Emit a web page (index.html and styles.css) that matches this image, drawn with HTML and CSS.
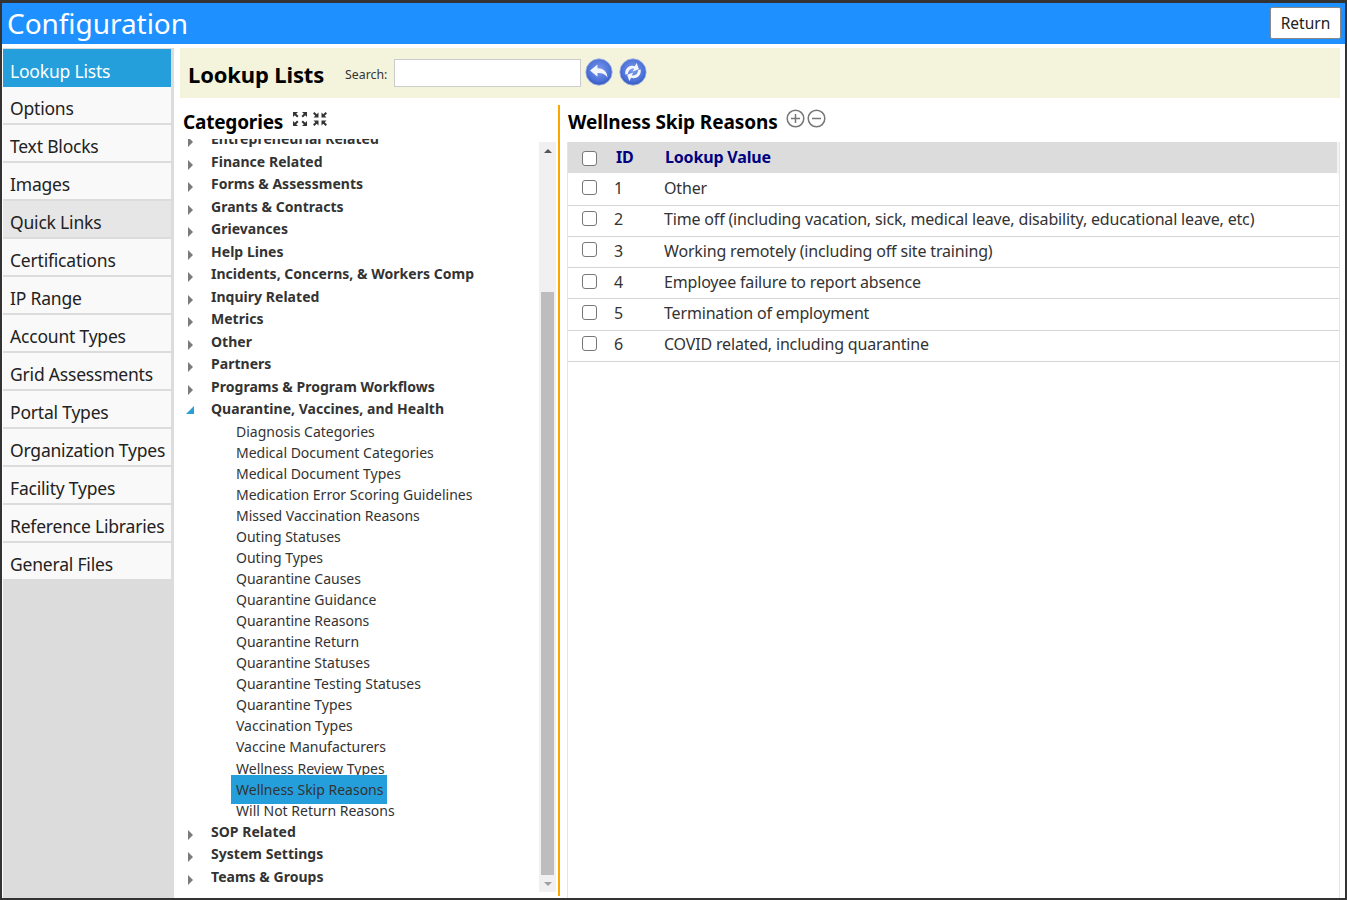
FILE: index.html
```html
<!DOCTYPE html>
<html lang="en">
<head>
    <meta charset="UTF-8">
    <title>Configuration</title>
    <link rel="stylesheet" href="styles.css">
</head>
<body>
    <div class="frame">
        <div class="topbar">
            <h1>Configuration</h1>
            <button class="return-btn">Return</button>
        </div>
        <div class="main">
            <div class="sidebar">
                <a class="side-item active">Lookup Lists</a>
                <a class="side-item">Options</a>
                <a class="side-item">Text Blocks</a>
                <a class="side-item">Images</a>
                <a class="side-item grey">Quick Links</a>
                <a class="side-item">Certifications</a>
                <a class="side-item">IP Range</a>
                <a class="side-item">Account Types</a>
                <a class="side-item">Grid Assessments</a>
                <a class="side-item">Portal Types</a>
                <a class="side-item">Organization Types</a>
                <a class="side-item">Facility Types</a>
                <a class="side-item">Reference Libraries</a>
                <a class="side-item">General Files</a>
            </div>
            <div class="content">
                <div class="search-bar">
                    <h2>Lookup Lists</h2>
                    <label for="search">Search:</label>
                    <input type="text" id="search">
                    <svg class="round-btn" width="28" height="28" viewBox="0 0 28 28">
                        <defs>
                            <radialGradient id="blue1" cx="50%" cy="42%" r="62%">
                                <stop offset="0" stop-color="#7d9bea"/>
                                <stop offset="0.7" stop-color="#4a70d8"/>
                                <stop offset="1" stop-color="#2c4db4"/>
                            </radialGradient>
                        </defs>
                        <circle cx="14" cy="14" r="13.2" fill="url(#blue1)" stroke="#a9b9e2" stroke-width="0.8"/>
                        <path d="M5 12.5 12.5 6.5V10.2C18 10.2 22 13 22.5 19.5 20.5 16.3 17.5 15 12.5 15V18.8Z" fill="#f4f6fc"/>
                    </svg>
                    <svg class="round-btn" width="28" height="28" viewBox="0 0 28 28">
                        <circle cx="14" cy="14" r="13.2" fill="url(#blue1)" stroke="#a9b9e2" stroke-width="0.8"/>
                        <g transform="rotate(-20 14 14)">
                            <path d="M6 14C6.5 10 9.5 7.5 13 7.5 15 7.5 16.5 8.2 17.6 9.2L20.5 6.8V13.5H13.8L16.2 11.4C15.4 10.8 14.4 10.5 13.4 10.5 11 10.5 9.6 12 8.6 14Z" fill="#f4f6fc"/>
                            <path d="M22 14C21.5 18 18.5 20.5 15 20.5 13 20.5 11.5 19.8 10.4 18.8L7.5 21.2V14.5H14.2L11.8 16.6C12.6 17.2 13.6 17.5 14.6 17.5 17 17.5 18.4 16 19.4 14Z" fill="#f4f6fc"/>
                        </g>
                    </svg>
                </div>
                <div class="panels">
                    <div class="categories">
                        <div class="panel-head">
                            <h3>Categories</h3>
                            <svg class="tool-icon" width="16" height="16" viewBox="0 0 16 16">
                                <path d="M1 6V1H6L4.2 2.8 6.5 5.1 5.1 6.5 2.8 4.2ZM15 6V1H10L11.8 2.8 9.5 5.1 10.9 6.5 13.2 4.2ZM1 10V15H6L4.2 13.2 6.5 10.9 5.1 9.5 2.8 11.8ZM15 10V15H10L11.8 13.2 9.5 10.9 10.9 9.5 13.2 11.8Z" fill="#333"/>
                            </svg>
                            <svg class="tool-icon" width="16" height="16" viewBox="0 0 16 16">
                                <path d="M6.5 1.5V6.5H1.5L3.3 4.7 1 2.4 2.4 1 4.7 3.3ZM9.5 1.5V6.5H14.5L12.7 4.7 15 2.4 13.6 1 11.3 3.3ZM6.5 14.5V9.5H1.5L3.3 11.3 1 13.6 2.4 15 4.7 12.7ZM9.5 14.5V9.5H14.5L12.7 11.3 15 13.6 13.6 15 11.3 12.7Z" fill="#333"/>
                            </svg>
                        </div>
                        <div class="tree-wrap">
                            <div class="tree">
                                <ul class="tree-list">
                                    <li class="cat">Entrepreneurial Related</li>
                                    <li class="cat">Finance Related</li>
                                    <li class="cat">Forms &amp; Assessments</li>
                                    <li class="cat">Grants &amp; Contracts</li>
                                    <li class="cat">Grievances</li>
                                    <li class="cat">Help Lines</li>
                                    <li class="cat">Incidents, Concerns, &amp; Workers Comp</li>
                                    <li class="cat">Inquiry Related</li>
                                    <li class="cat">Metrics</li>
                                    <li class="cat">Other</li>
                                    <li class="cat">Partners</li>
                                    <li class="cat">Programs &amp; Program Workflows</li>
                                    <li class="cat open">Quarantine, Vaccines, and Health</li>
                                    <li class="sub">Diagnosis Categories</li>
                                    <li class="sub">Medical Document Categories</li>
                                    <li class="sub">Medical Document Types</li>
                                    <li class="sub">Medication Error Scoring Guidelines</li>
                                    <li class="sub">Missed Vaccination Reasons</li>
                                    <li class="sub">Outing Statuses</li>
                                    <li class="sub">Outing Types</li>
                                    <li class="sub">Quarantine Causes</li>
                                    <li class="sub">Quarantine Guidance</li>
                                    <li class="sub">Quarantine Reasons</li>
                                    <li class="sub">Quarantine Return</li>
                                    <li class="sub">Quarantine Statuses</li>
                                    <li class="sub">Quarantine Testing Statuses</li>
                                    <li class="sub">Quarantine Types</li>
                                    <li class="sub">Vaccination Types</li>
                                    <li class="sub">Vaccine Manufacturers</li>
                                    <li class="sub">Wellness Review Types</li>
                                    <li class="sub"><span class="selected">Wellness Skip Reasons</span></li>
                                    <li class="sub">Will Not Return Reasons</li>
                                    <li class="cat">SOP Related</li>
                                    <li class="cat">System Settings</li>
                                    <li class="cat">Teams &amp; Groups</li>
                                </ul>
                            </div>
                            <div class="scrollbar">
                                <div class="arrow-up"></div>
                                <div class="track"><div class="thumb"></div></div>
                                <div class="arrow-down"></div>
                            </div>
                        </div>
                    </div>
                    <div class="values">
                        <div class="values-head">
                            <h3>Wellness Skip Reasons</h3>
                            <svg class="tool-icon" width="19" height="19" viewBox="0 0 19 19">
                                <circle cx="9.5" cy="9.5" r="8.3" fill="none" stroke="#777" stroke-width="1.5"/>
                                <path d="M9.5 5V14M5 9.5H14" stroke="#777" stroke-width="1.5"/>
                            </svg>
                            <svg class="tool-icon" width="19" height="19" viewBox="0 0 19 19">
                                <circle cx="9.5" cy="9.5" r="8.3" fill="none" stroke="#777" stroke-width="1.5"/>
                                <path d="M5 9.5H14" stroke="#777" stroke-width="1.5"/>
                            </svg>
                        </div>
                        <div class="table-box">
                            <div class="row head">
                                <div class="c-check"><span class="check"></span></div>
                                <div class="c-id">ID</div>
                                <div class="c-val">Lookup Value</div>
                            </div>
                            <div class="row">
                                <div class="c-check"><span class="check"></span></div>
                                <div class="c-id">1</div>
                                <div class="c-val">Other</div>
                            </div>
                            <div class="row">
                                <div class="c-check"><span class="check"></span></div>
                                <div class="c-id">2</div>
                                <div class="c-val">Time off (including vacation, sick, medical leave, disability, educational leave, etc)</div>
                            </div>
                            <div class="row">
                                <div class="c-check"><span class="check"></span></div>
                                <div class="c-id">3</div>
                                <div class="c-val">Working remotely (including off site training)</div>
                            </div>
                            <div class="row">
                                <div class="c-check"><span class="check"></span></div>
                                <div class="c-id">4</div>
                                <div class="c-val">Employee failure to report absence</div>
                            </div>
                            <div class="row">
                                <div class="c-check"><span class="check"></span></div>
                                <div class="c-id">5</div>
                                <div class="c-val">Termination of employment</div>
                            </div>
                            <div class="row">
                                <div class="c-check"><span class="check"></span></div>
                                <div class="c-id">6</div>
                                <div class="c-val">COVID related, including quarantine</div>
                            </div>
                        </div>
                    </div>
                </div>
            </div>
        </div>
    </div>
</body>
</html>
```

FILE: styles.css
```css
html, body {
    height: 100%;
    margin: 0;
    padding: 0;
}
body {
    font-family: "Noto Sans", "Open Sans", sans-serif;
    background-color: #fff;
    color: #222;
    overflow: hidden;
}
.frame {
    height: 900px;
    box-sizing: border-box;
    border: 2px solid #333;
    border-top-width: 3px;
    display: flex;
    flex-direction: column;
}
.topbar {
    height: 41px;
    background-color: #1e90ff;
    display: flex;
    justify-content: space-between;
    align-items: center;
    padding: 0 4px 0 5px;
    flex-shrink: 0;
}
h1 {
    margin: -2px 0 0 0;
    font-size: 28px;
    font-weight: 400;
    color: #fff;
    letter-spacing: -0.05px;
}
.return-btn {
    width: 71px;
    height: 32px;
    margin-top: -1px;
    background-color: #fff;
    border: 1px solid #888;
    border-radius: 2px;
    font-family: inherit;
    font-size: 15.5px;
    color: #222;
    padding: 0;
}
.main {
    flex-grow: 1;
    display: flex;
    min-height: 0;
}
.sidebar {
    width: 171px;
    margin-left: 1px;
    margin-top: 4px;
    padding: 1px 3px 0 0;
    box-sizing: border-box;
    background-color: #dcdcdc;
    flex-shrink: 0;
    display: flex;
    flex-direction: column;
}
.side-item {
    height: 36px;
    margin-bottom: 2px;
    background-color: #f9f9f9;
    font-size: 17.5px;
    line-height: 42px;
    padding-left: 7px;
    color: #222;
    letter-spacing: -0.2px;
    white-space: nowrap;
    flex-shrink: 0;
}
.side-item.active {
    background-color: #249fdc;
    color: #fff;
    height: 38px;
    line-height: 44px;
    margin-bottom: 0;
}
.side-item.grey {
    background-color: #e6e6e6;
}
.content {
    flex-grow: 1;
    padding: 4px 5px 0 6px;
    min-width: 0;
    display: flex;
    flex-direction: column;
}
.search-bar {
    height: 50px;
    background-color: #f4f4dc;
    display: flex;
    align-items: center;
    padding-left: 8px;
    flex-shrink: 0;
}
h2 {
    margin: 2px 21px 0 0;
    font-size: 22px;
    font-weight: 700;
    color: #000;
    letter-spacing: -0.15px;
}
.search-bar label {
    font-size: 12.3px;
    color: #333;
    margin: 2px 7px 0 0;
}
.search-bar input {
    width: 187px;
    height: 28px;
    box-sizing: border-box;
    border: 1px solid #ccc;
    background-color: #fff;
    margin-right: 4px;
}
.round-btn {
    margin: -2px 6px 0 0;
}
.panels {
    flex-grow: 1;
    display: flex;
    min-height: 0;
    margin-top: 7px;
}
.categories {
    width: 378px;
    border-right: 2px solid #ffa500;
    display: flex;
    flex-direction: column;
    flex-shrink: 0;
    margin-bottom: 2px;
}
.panel-head {
    height: 34px;
    display: flex;
    align-items: center;
    padding-left: 3px;
    flex-shrink: 0;
}
h3 {
    margin: 0;
    font-size: 19px;
    font-weight: 700;
    color: #000;
    letter-spacing: -0.2px;
}
.tool-icon {
    margin-left: 4px;
    margin-top: -6px;
    flex-shrink: 0;
}
.panel-head h3 {
    margin-right: 5px;
}
.tree-wrap {
    flex-grow: 1;
    display: flex;
    min-height: 0;
}
.tree {
    flex-grow: 1;
    overflow: hidden;
    min-width: 0;
}
.tree-list {
    list-style: none;
    margin: -10.75px 0 0 0;
    padding: 0;
}
.cat {
    height: 22.5px;
    line-height: 22.5px;
    padding-left: 31px;
    font-size: 14px;
    font-weight: 700;
    color: #333;
    position: relative;
    letter-spacing: 0.03px;
    white-space: nowrap;
}
.cat::before {
    content: "";
    position: absolute;
    left: 8px;
    top: 9px;
    border-left: 5px solid #7b7b7b;
    border-top: 5px solid transparent;
    border-bottom: 5px solid transparent;
}
.cat.open::before {
    left: 6px;
    top: 8px;
    border: none;
    border-left: 8px solid transparent;
    border-bottom: 8px solid #2a9fd6;
}
.sub {
    height: 21.05px;
    line-height: 21px;
    padding-left: 56px;
    font-size: 14px;
    color: #333;
    white-space: nowrap;
}
.selected {
    display: inline-block;
    height: 29px;
    line-height: 29px;
    margin: -4px 0 0 -5px;
    padding: 0 4px 0 5px;
    background-color: #249fdc;
    position: relative;
    vertical-align: top;
}
.scrollbar {
    width: 17px;
    background-color: #f0f0f0;
    display: flex;
    flex-direction: column;
    align-items: center;
    margin: 3px 2px 4px 0;
    flex-shrink: 0;
}
.arrow-up, .arrow-down {
    height: 17px;
    width: 17px;
    position: relative;
    flex-shrink: 0;
}
.arrow-up::after {
    content: "";
    position: absolute;
    left: 5px;
    top: 7px;
    border-left: 4px solid transparent;
    border-right: 4px solid transparent;
    border-bottom: 4px solid #555;
}
.arrow-down::after {
    content: "";
    position: absolute;
    left: 5px;
    top: 7px;
    border-left: 4px solid transparent;
    border-right: 4px solid transparent;
    border-top: 4px solid #a0a0a0;
}
.track {
    flex-grow: 1;
    width: 100%;
    display: flex;
    flex-direction: column;
    justify-content: flex-end;
}
.thumb {
    height: 583px;
    background-color: #bdbdbd;
    margin: 0 2px;
}
.values {
    flex-grow: 1;
    min-width: 0;
    padding-left: 7px;
    display: flex;
    flex-direction: column;
}
.values-head {
    height: 37px;
    display: flex;
    align-items: center;
    padding-left: 1px;
    flex-shrink: 0;
}
.values-head .tool-icon {
    margin: -10px 0 0 2px;
}
.values-head h3 {
    margin: -4px 6px 0 0;
    letter-spacing: -0.1px;
}
.table-box {
    flex-grow: 1;
    border-left: 1px solid #e4e4e4;
    border-right: 1px solid #e4e4e4;
}
.row {
    height: 31.25px;
    box-sizing: border-box;
    padding-bottom: 2.6px;
    display: flex;
    align-items: center;
    border-bottom: 1px solid #d4d4d4;
    font-size: 16px;
    color: #333;
    letter-spacing: -0.17px;
}
.row.head {
    height: 32.25px;
    padding-bottom: 2px;
    background-color: #dcdcdc;
    border-bottom: 1px solid #fff;
    border-right: 2px solid #f4f4f4;
    font-weight: 700;
    color: #000080;
}
.c-check {
    width: 46px;
    padding-left: 14px;
    margin-bottom: 1.4px;
    box-sizing: border-box;
    flex-shrink: 0;
    display: flex;
}
.head .c-check {
    margin: 4px 0 0 0;
}
.c-id {
    width: 50px;
    flex-shrink: 0;
}
.head .c-id {
    padding-left: 2px;
    box-sizing: border-box;
}
.head .c-val {
    padding-left: 1px;
}
.check {
    width: 13px;
    height: 13px;
    border: 1px solid #777;
    border-radius: 3px;
    background-color: #fff;
    display: block;
}
```
